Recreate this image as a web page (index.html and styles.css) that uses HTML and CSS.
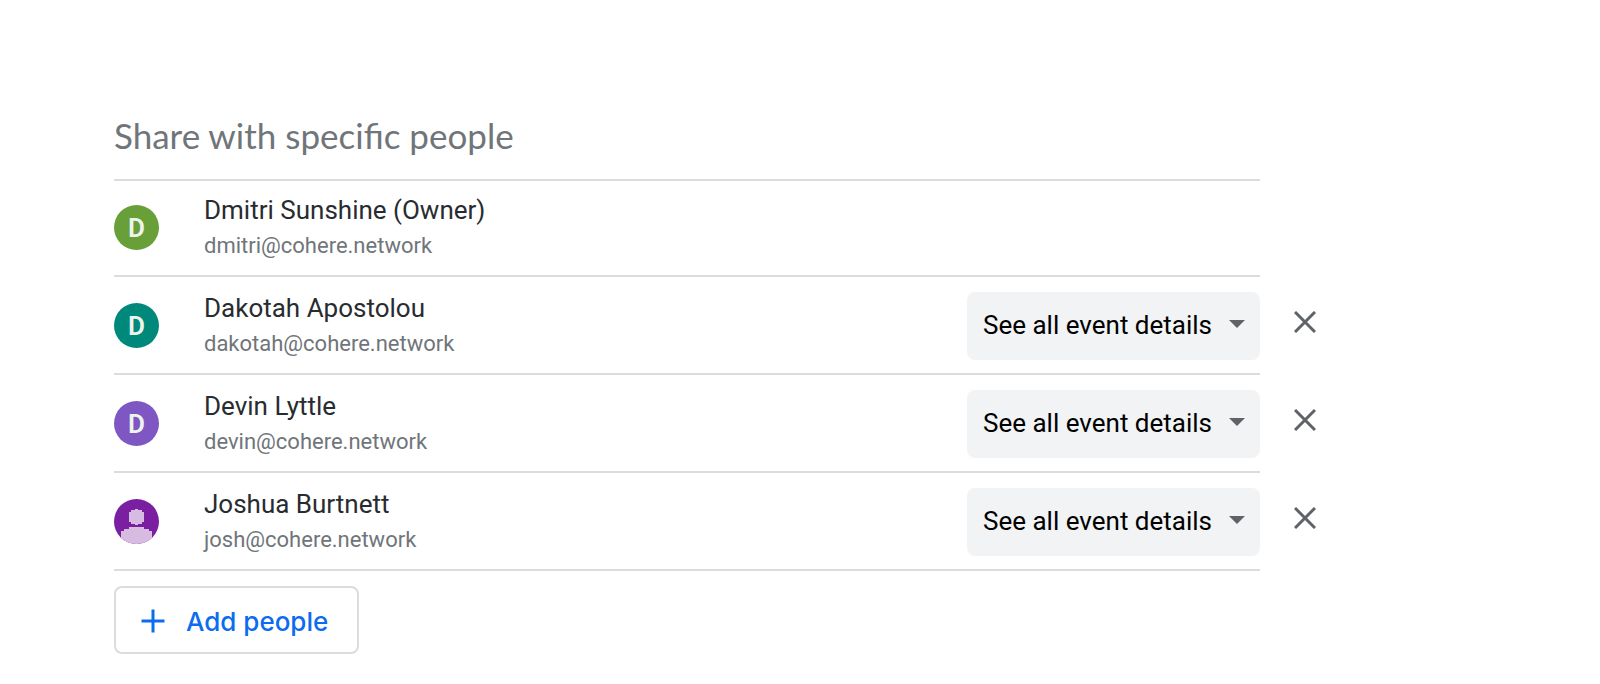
FILE: index.html
```
<!DOCTYPE html>
<html lang="en">
<head>
    <meta charset="UTF-8">
    <meta name="viewport" content="width=device-width, initial-scale=1.0">
    <title>Share with specific people</title>
    <link rel="stylesheet" href="styles.css">
</head>
<body>
    <main class="sharing">
        <h1>Share with specific people</h1>

        <ul class="people">
            <li class="row">
                <div class="entry">
                    <span class="avatar green">D</span>
                    <div class="person">
                        <div class="name">Dmitri Sunshine (Owner)</div>
                        <div class="email">dmitri@cohere.network</div>
                    </div>
                </div>
            </li>
            <li class="row">
                <div class="entry">
                    <span class="avatar teal">D</span>
                    <div class="person">
                        <div class="name">Dakotah Apostolou</div>
                        <div class="email">dakotah@cohere.network</div>
                    </div>
                    <div class="permission">
                        <select aria-label="Permissions for Dakotah Apostolou">
                            <option>See all event details</option>
                        </select>
                    </div>
                </div>
                <button type="button" class="remove" aria-label="Remove Dakotah Apostolou">
                    <svg width="22" height="22" viewBox="0 0 22 22"><path d="M1 1L21 21M21 1L1 21"/></svg>
                </button>
            </li>
            <li class="row">
                <div class="entry">
                    <span class="avatar purple">D</span>
                    <div class="person">
                        <div class="name">Devin Lyttle</div>
                        <div class="email">devin@cohere.network</div>
                    </div>
                    <div class="permission">
                        <select aria-label="Permissions for Devin Lyttle">
                            <option>See all event details</option>
                        </select>
                    </div>
                </div>
                <button type="button" class="remove" aria-label="Remove Devin Lyttle">
                    <svg width="22" height="22" viewBox="0 0 22 22"><path d="M1 1L21 21M21 1L1 21"/></svg>
                </button>
            </li>
            <li class="row">
                <div class="entry">
                    <svg class="avatar violet" viewBox="0 0 45 45">
                        <path d="M21 10H24V11H28V13H30V23H28V25H24V26H21V25H17V23H15V13H17V11H21Z"/>
                        <path d="M15 28H30V30H35V32H38V45H7V32H10V30H15Z"/>
                    </svg>
                    <div class="person">
                        <div class="name">Joshua Burtnett</div>
                        <div class="email">josh@cohere.network</div>
                    </div>
                    <div class="permission">
                        <select aria-label="Permissions for Joshua Burtnett">
                            <option>See all event details</option>
                        </select>
                    </div>
                </div>
                <button type="button" class="remove" aria-label="Remove Joshua Burtnett">
                    <svg width="22" height="22" viewBox="0 0 22 22"><path d="M1 1L21 21M21 1L1 21"/></svg>
                </button>
            </li>
        </ul>

        <button type="button" class="add">
            <svg width="24" height="24" viewBox="0 0 24 24"><path d="M12 0.5V23.5M0.5 12H23.5"/></svg>
            Add people
        </button>
    </main>
</body>
</html>
```

FILE: styles.css
```
* {
    box-sizing: border-box;
}

body {
    margin: 0;
    background-color: #ffffff;
    color: #282c30;
    font-family: Roboto, Arial, sans-serif;
}

.sharing {
    padding: 111px 250px 24px 114px;
}

h1 {
    margin: 0 90px 0 0;
    padding-bottom: 20px;
    border-bottom: 2px solid #dadce0;
    color: #70757a;
    font-family: Lato, sans-serif;
    font-size: 35px;
    font-weight: 400;
    line-height: 48px;
}

.people {
    margin: 0;
    padding: 0;
    list-style: none;
}

/* the remove button hangs outside the divider line */
.row {
    display: grid;
    grid-template-columns: 1fr 90px;
}

.entry {
    display: flex;
    align-items: center;
    padding: 13px 0 11px;
    border-bottom: 2px solid #dadce0;
}

.row:first-child .entry {
    padding-top: 11px;
}

.avatar {
    flex: none;
    width: 45px;
    height: 45px;
    margin: 0 45px 1px 0;
    border-radius: 50%;
    color: #edf4ec;
    font-size: 26px;
    font-weight: 600;
    line-height: 46px;
    text-align: center;
}

.green {
    background-color: #689f38;
}

.teal {
    background-color: #00897b;
}

.purple {
    background-color: #7e57c2;
}

.violet {
    background-color: #7b1fa2;
    fill: #d7bce1;
}

.person {
    flex: 1;
    line-height: 36px;
}

.name {
    font-size: 26px;
}

.email {
    color: #70757a;
    font-size: 22px;
}

.permission {
    display: grid;
    align-items: center;
}

.permission select,
.permission::after {
    grid-area: 1 / 1;
}

.permission select {
    appearance: none;
    width: 293px;
    height: 68px;
    padding: 0 44px 2px 16px;
    border: none;
    border-radius: 8px;
    background-color: #f1f3f4;
    color: #000000;
    font-family: inherit;
    font-size: 26px;
}

.permission::after {
    content: "";
    justify-self: end;
    margin: 0 15px 4px 0;
    border: 8px solid transparent;
    border-top-color: #5f6368;
    border-bottom: none;
    pointer-events: none;
}

.remove {
    padding: 0 0 8px;
    border: none;
    background: none;
    cursor: pointer;
}

.remove svg {
    display: block;
    margin: 0 auto;
    stroke: #5f6368;
    stroke-width: 3;
}

.add {
    display: flex;
    align-items: center;
    gap: 21px;
    height: 68px;
    margin-top: 15px;
    padding: 2px 29px 0 25px;
    border: 2px solid #dadce0;
    border-radius: 8px;
    background-color: #ffffff;
    color: #0b6cf0;
    font-family: Inter, sans-serif;
    font-size: 26px;
    font-weight: 500;
    cursor: pointer;
}

.add svg {
    stroke: #0b6cf0;
    stroke-width: 3;
}
```
